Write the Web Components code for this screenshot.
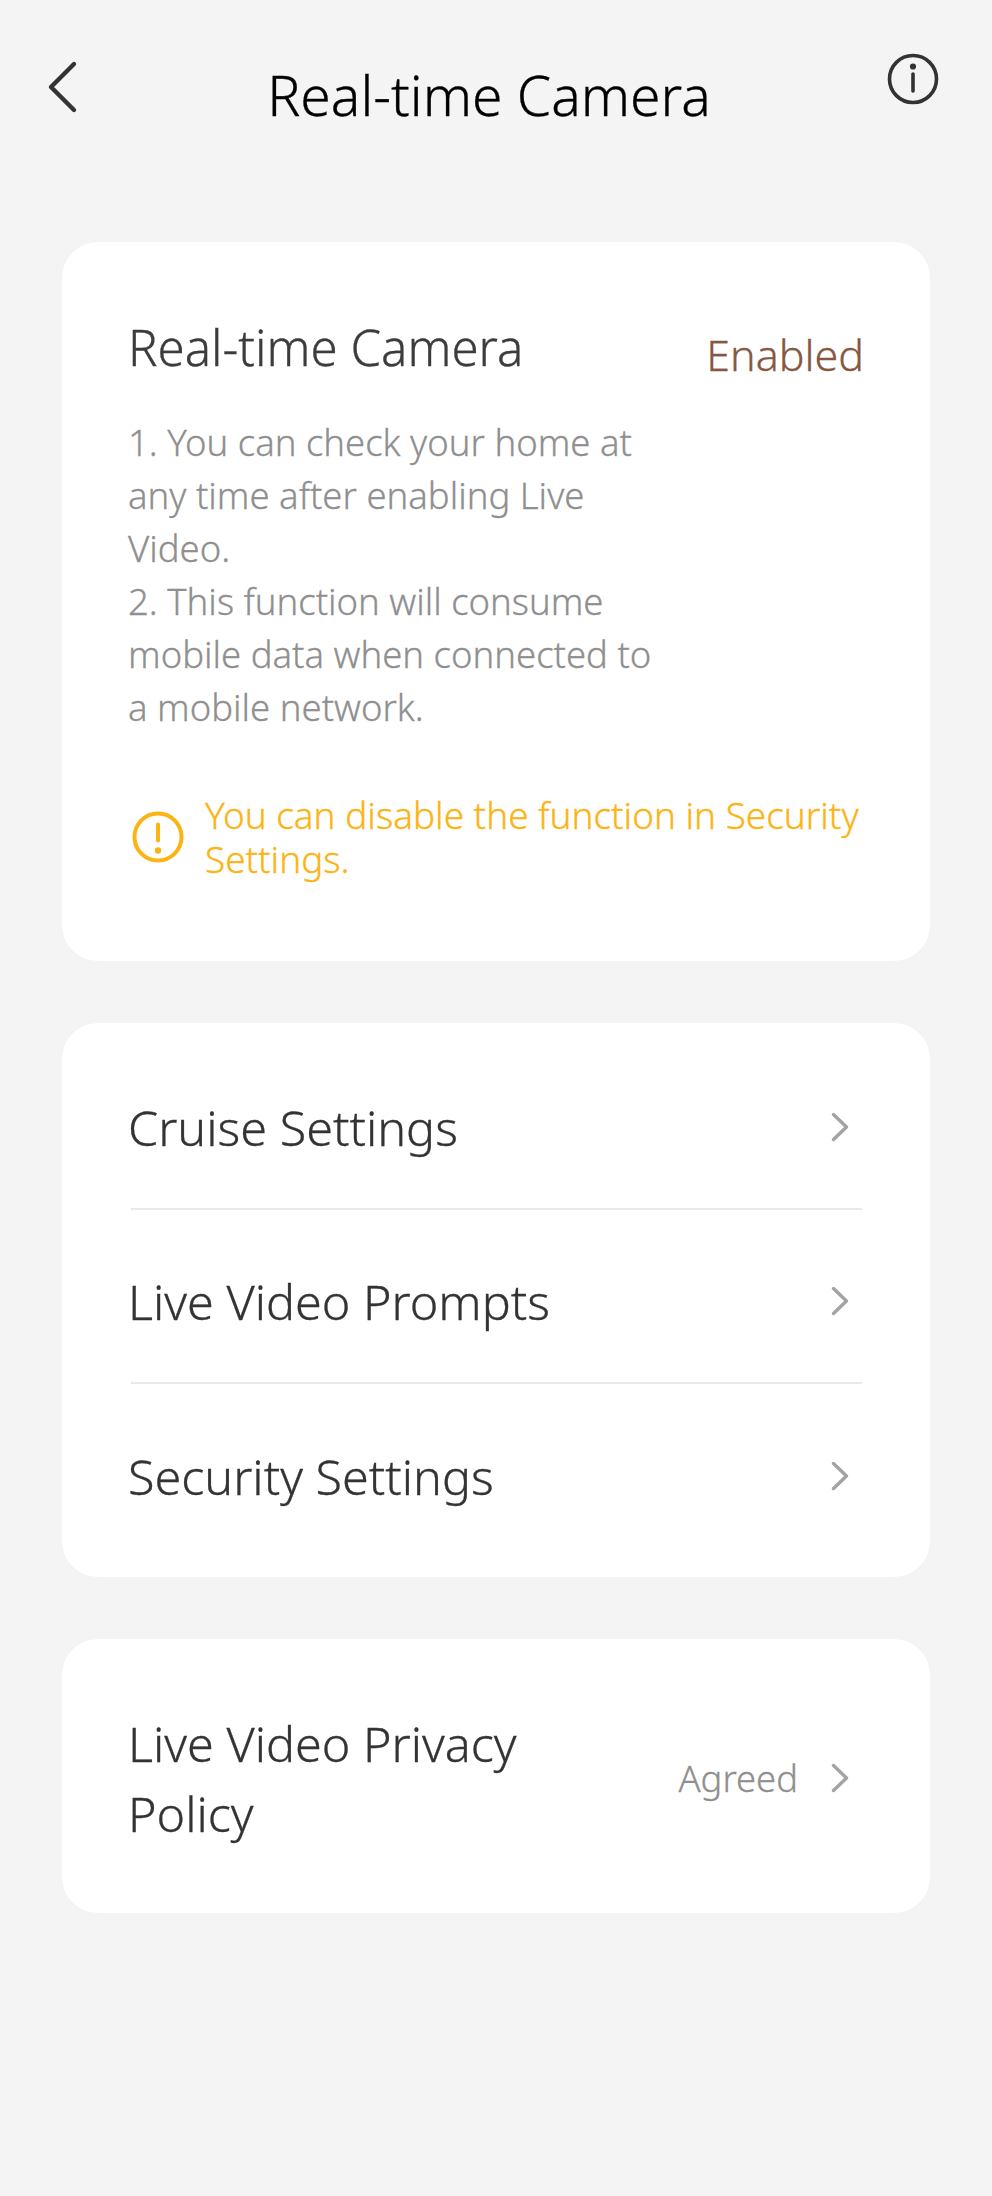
<!DOCTYPE html>
<html>
<head>
<meta charset="utf-8">
<title>Real-time Camera</title>
<style>
    html, body {
        margin: 0;
        background: #f4f4f4;
        font-family: "Noto Sans", "Open Sans", sans-serif;
        font-weight: 300;
        -webkit-text-stroke: 0.3px;
    }
    main {
        display: flex;
        flex-direction: column;
        gap: 62px;
        padding: 0 62px;
    }
</style>
</head>
<body>
<app-header>Real-time Camera</app-header>
<main>
    <status-card heading="Real-time Camera" status="Enabled">
        1. You can check your home at any time after enabling Live Video.<br>
        2. This function will consume mobile data when connected to a mobile network.
        <span slot="notice">You can disable the function in Security Settings.</span>
    </status-card>
    <settings-group>
        <settings-row>Cruise Settings</settings-row>
        <settings-row>Live Video Prompts</settings-row>
        <settings-row>Security Settings</settings-row>
    </settings-group>
    <settings-group>
        <settings-row value="Agreed" tall>Live Video Privacy Policy</settings-row>
    </settings-group>
</main>

<script>
class AppHeader extends HTMLElement {
    constructor() {
        super();
        this.attachShadow({ mode: 'open' });
        this.shadowRoot.innerHTML = `
            <style>
                :host {
                    display: grid;
                    grid-template-columns: 86px 1fr 100px;
                    align-items: center;
                    height: 242px;
                    padding-bottom: 54px;
                    box-sizing: border-box;
                }
                h1 {
                    margin: 0;
                    font-size: 55.2px;
                    font-weight: 300;
                    color: #000;
                    text-align: center;
                }
                svg { display: block; }
                .back { margin: -16px 0 0 44px; }
                .info { margin: -30px 0 0 -5px; }
            </style>
            <svg class="back" width="36" height="56" viewBox="0 0 36 56" fill="none" stroke="#333" stroke-width="4.4" stroke-linecap="round" stroke-linejoin="round">
                <path d="M30 6 7 29 30 52"/>
            </svg>
            <h1><slot></slot></h1>
            <svg class="info" width="52" height="52" viewBox="0 0 52 52" fill="none" stroke="#333" stroke-width="3.6" stroke-linecap="round">
                <circle cx="26" cy="26" r="23.5"/>
                <path d="M26 21v17"/>
                <circle cx="26" cy="13.5" r="1.3" fill="#333"/>
            </svg>
        `;
    }
}

class StatusCard extends HTMLElement {
    constructor() {
        super();
        this.attachShadow({ mode: 'open' });
        this.shadowRoot.innerHTML = `
            <style>
                :host {
                    display: block;
                    background: #fff;
                    border-radius: 36px;
                    padding: 72px 66px 80px 66px;
                }
                .top {
                    display: flex;
                    justify-content: space-between;
                    align-items: flex-start;
                    height: 66px;
                }
                h2 {
                    margin: 0;
                    font-size: 49.2px;
                    font-weight: 300;
                    line-height: 66px;
                    color: #3c3c3c;
                }
                .status {
                    margin-top: 11px;
                    font-size: 43px;
                    line-height: 60px;
                    color: #85583f;
                }
                .body {
                    margin-top: 36px;
                    width: 535px;
                    font-size: 36.5px;
                    line-height: 53px;
                    color: #8f8f8f;
                }
                .notice {
                    display: flex;
                    align-items: center;
                    gap: 21px;
                    margin: 59px -10px 0 0;
                    font-size: 36.9px;
                    line-height: 44px;
                    color: #fbb414;
                }
                svg { flex: none; display: block; margin-left: 4px; }
            </style>
            <div class="top">
                <h2></h2>
                <span class="status"></span>
            </div>
            <div class="body"><slot></slot></div>
            <div class="notice">
                <svg width="52" height="52" viewBox="0 0 52 52" fill="none" stroke="#fbb414" stroke-width="4" stroke-linecap="round">
                    <circle cx="26" cy="26" r="23.5"/>
                    <path d="M26 13.5v16"/>
                    <circle cx="26" cy="39.5" r="1.2" fill="#fbb414"/>
                </svg>
                <div><slot name="notice"></slot></div>
            </div>
        `;
    }

    connectedCallback() {
        this.shadowRoot.querySelector('h2').textContent = this.getAttribute('heading');
        this.shadowRoot.querySelector('.status').textContent = this.getAttribute('status');
    }
}

class SettingsGroup extends HTMLElement {
    constructor() {
        super();
        this.attachShadow({ mode: 'open' });
        this.shadowRoot.innerHTML = `
            <style>
                :host {
                    display: block;
                    background: #fff;
                    border-radius: 36px;
                    overflow: hidden;
                    padding: 13px 0 19px;
                }
            </style>
            <slot></slot>
        `;
    }
}

class SettingsRow extends HTMLElement {
    constructor() {
        super();
        this.attachShadow({ mode: 'open' });
        this.shadowRoot.innerHTML = `
            <style>
                :host {
                    display: block;
                    padding: 0 68px 0 66px;
                }
                .row {
                    display: flex;
                    align-items: center;
                    min-height: 174px;
                    padding-top: 10px;
                    box-sizing: border-box;
                    font-size: 48.5px;
                    line-height: 70px;
                    color: #333;
                }
                :host(:not(:last-child)) .row {
                    border-bottom: 2px solid #e8e8e8;
                    margin-left: 3px;
                }
                :host(:not(:last-child)) .label { margin-left: -3px; }
                :host([tall]) .row { min-height: 242px; padding-top: 10px; }
                .label { flex: 1; min-width: 0; }
                :host([tall]) .label { width: 430px; flex: none; }
                .value {
                    margin-left: auto;
                    font-size: 36.4px;
                    color: #8f8f8f;
                }
                svg { flex: none; display: block; margin: 0 13px 0 33px; }
            </style>
            <div class="row">
                <div class="label"><slot></slot></div>
                <span class="value"></span>
                <svg width="18" height="30" viewBox="0 0 18 30" fill="none" stroke="#a3a3a3" stroke-width="3.4" stroke-linecap="round" stroke-linejoin="round">
                    <path d="M2.5 2.5 15.5 15 2.5 27.5"/>
                </svg>
            </div>
        `;
    }

    connectedCallback() {
        this.shadowRoot.querySelector('.value').textContent = this.getAttribute('value') || '';
    }
}

customElements.define('app-header', AppHeader);
customElements.define('status-card', StatusCard);
customElements.define('settings-group', SettingsGroup);
customElements.define('settings-row', SettingsRow);
</script>
</body>
</html>
